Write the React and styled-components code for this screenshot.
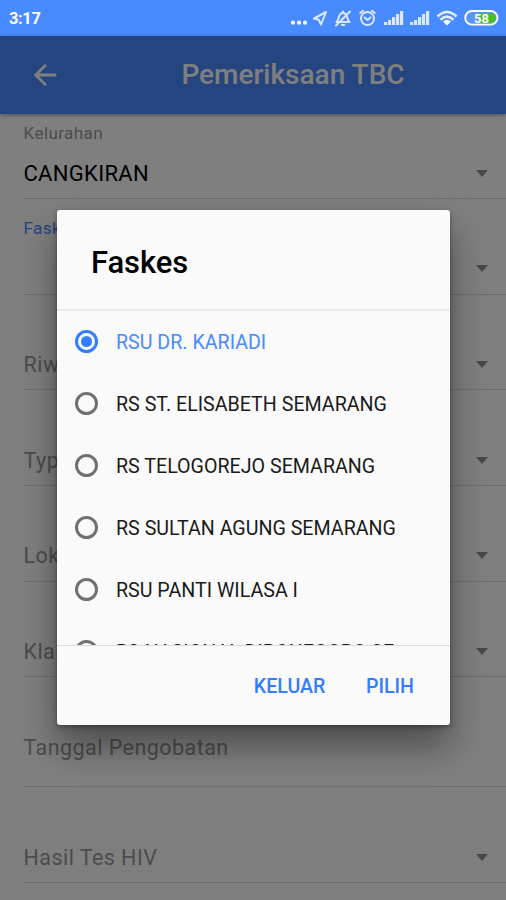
import React, { useState } from 'react';
import styled, { createGlobalStyle } from 'styled-components';
import { MdArrowBack } from 'react-icons/md';

const theme = {
  primary: '#488aff',
  link: '#327eff',
  page: '#ffffff',
  dialog: '#fafafa',
};

const GlobalStyle = createGlobalStyle`
  * {
    box-sizing: border-box;
  }

  body {
    margin: 0;
    overflow: hidden;
    font-family: Roboto, "Liberation Sans", sans-serif;
  }
`;

const Screen = styled.div`
  position: relative;
  width: 506px;
  height: 900px;
  overflow: hidden;
  background: ${theme.page};
`;

const StatusBar = styled.div`
  display: flex;
  align-items: center;
  justify-content: space-between;
  height: 36px;
  padding: 0 7px 0 9px;
  background: ${theme.primary};
  color: #ffffff;
`;

const Clock = styled.span`
  font-size: 16.5px;
  font-weight: 700;
  line-height: 36px;
  padding-top: 2px;
  letter-spacing: -0.4px;
`;

const StatusIcons = styled.svg`
  display: block;
  width: 211px;
  height: 36px;
`;

const Header = styled.header`
  display: flex;
  align-items: center;
  height: 78px;
  background: ${theme.primary};
  color: #ffffff;
  box-shadow: 0 1px 4px rgb(0 0 0 / 40%);
`;

const BackButton = styled.button`
  display: flex;
  align-items: center;
  justify-content: center;
  width: 90px;
  height: 78px;
  padding: 0;
  border: 0;
  background: none;
  color: inherit;
  font-size: 34px;
`;

const Title = styled.h1`
  flex: 1;
  margin: 0;
  padding: 0 10px 1px 0;
  font-size: 28px;
  font-weight: 500;
  text-align: center;
`;

const Form = styled.form`
  padding-left: 23.5px;
`;

const Field = styled.div`
  display: flex;
  flex-direction: column;
  justify-content: flex-end;
  height: ${({ $height }) => $height || 95.7}px;
  border-bottom: 1px solid #dedede;
`;

const FieldLabel = styled.label`
  font-size: 17.2px;
  line-height: 20px;
  letter-spacing: 0.35px;
  color: ${({ $active }) => ($active ? theme.primary : '#999999')};
`;

const FieldRow = styled.div`
  display: flex;
  align-items: center;
  justify-content: space-between;
  height: 24px;
  margin: ${({ $floating, $date }) => ($floating ? '18.5px 18.5px 13px 0' : $date ? '0 18.5px 27px 0' : '0 18.5px 13px 0')};
`;

const FieldText = styled.span`
  font-size: ${({ $value }) => ($value ? '22px' : '21.5px')};
  letter-spacing: ${({ $value }) => ($value ? '0.3px' : '0.45px')};
  color: ${({ $value }) => ($value ? '#000000' : '#999999')};
`;

const Caret = styled.span`
  margin-left: auto;
  border: 6.5px solid transparent;
  border-top: 7px solid #909090;
  border-bottom: 0;
`;

const Backdrop = styled.div`
  position: absolute;
  inset: 36px 0 0;
  background: rgb(0 0 0 / 50%);
`;

const Dialog = styled.div`
  position: absolute;
  top: 210px;
  left: 57px;
  display: flex;
  flex-direction: column;
  width: 393px;
  height: 515px;
  border-radius: 3px;
  background: ${theme.dialog};
  box-shadow: 0 21px 36px rgb(0 0 0 / 40%), 0 2px 5px rgb(0 0 0 / 35%);
`;

const DialogTitle = styled.h2`
  height: 99px;
  margin: 0;
  padding: 34px 34px 0;
  font-size: 31px;
  font-weight: 500;
  line-height: 37px;
  letter-spacing: -0.1px;
  color: #000000;
`;

const OptionList = styled.div`
  height: 337px;
  overflow: hidden;
  border-top: 2px solid #ececec;
  border-bottom: 1px solid #dcdcdc;
`;

const Option = styled.button`
  display: flex;
  align-items: center;
  gap: 18px;
  width: 100%;
  height: 61.9px;
  padding: 0 0 0 18px;
  border: 0;
  background: none;
  font-family: inherit;
  font-size: 19.65px;
  text-align: left;
  white-space: nowrap;
  color: ${({ $checked }) => ($checked ? theme.primary : '#1a1a1a')};
`;

const Radio = styled.span`
  display: flex;
  align-items: center;
  justify-content: center;
  flex: none;
  width: 23px;
  height: 23px;
  border: 3px solid ${({ $checked }) => ($checked ? theme.link : '#707070')};
  border-radius: 50%;

  &::after {
    content: '';
    width: 11px;
    height: 11px;
    border-radius: 50%;
    background: ${({ $checked }) => ($checked ? theme.link : 'transparent')};
  }
`;

const OptionText = styled.span`
  width: 300px;
  padding-top: 2px;
  overflow: hidden;
  text-overflow: ellipsis;
`;

const DialogFooter = styled.div`
  display: flex;
  align-items: center;
  justify-content: flex-end;
  gap: 40.5px;
  flex: 1;
  padding: 2px 36px 0 0;
`;

const DialogButton = styled.button`
  padding: 0;
  border: 0;
  background: none;
  color: ${theme.link};
  font-family: inherit;
  font-size: 19.6px;
  font-weight: 500;
`;

const fields = [
  { label: 'Kelurahan', value: 'CANGKIRAN', height: 85, floating: true },
  { label: 'Faskes', value: '', active: true, floating: true },
  { label: 'Riwayat' },
  { label: 'Type' },
  { label: 'Lokasi' },
  { label: 'Klasifikasi' },
  { label: 'Tanggal Pengobatan', height: 110, date: true },
  { label: 'Hasil Tes HIV' },
];

const hospitals = [
  'RSU DR. KARIADI',
  'RS ST. ELISABETH SEMARANG',
  'RS TELOGOREJO SEMARANG',
  'RS SULTAN AGUNG SEMARANG',
  'RSU PANTI WILASA I',
  'RS NASIONAL DIPONEGORO SE',
];

const SignalBars = ({ x }) => (
  <g fill="#dbe8ff">
    {[3, 5, 8, 11, 14].map((h, i) => (
      <rect key={h} x={x + i * 4} y={25 - h} width="3.2" height={h} />
    ))}
  </g>
);

const StatusGlyphs = () => (
  <StatusIcons viewBox="288 0 211 36">
    <g fill="#ffffff">
      <circle cx="293" cy="22.7" r="2.1" />
      <circle cx="299" cy="22.7" r="2.1" />
      <circle cx="305" cy="22.7" r="2.1" />
    </g>
    <g fill="none" stroke="#dbe8ff" strokeWidth="2" strokeLinejoin="round" strokeLinecap="round">
      <path d="M326 12 L314 18.5 L318.7 19.7 L321 24.5 Z" />
      {/* muted bell */}
      <path d="M336.5 22 C339.5 20.5 337.5 13 343 13 C348.5 13 346.5 20.5 349.5 22 Z" />
      <path d="M343 11.5 V12.5 M341.8 25 H344.2 M350 11.5 L336 25.5" />
      {/* alarm */}
      <circle cx="367.5" cy="18.5" r="6.5" />
      <path d="M364.5 17.5 L367.5 20 L370.5 17.5 M360.3 13 L363 10.8 M374.7 13 L372 10.8" />
    </g>
    <SignalBars x={384} />
    <SignalBars x={410} />
    <g fill="none" stroke="#e6efff" strokeWidth="2.6">
      <path d="M437.5 16.5 Q447 7.5 456.5 16.5" />
      <path d="M440.5 19.8 Q447 13.5 453.5 19.8" />
    </g>
    <path d="M443 21.5 Q447 18 451 21.5 L447 25.5 Z" fill="#ffffff" />
    <rect x="465.2" y="11" width="32.3" height="13.6" rx="6.8" fill="#5b95f8" stroke="#ffffff" strokeWidth="1.9" />
    <path d="M479 12.9 H490.8 A4.9 4.9 0 0 1 490.8 22.7 H479 Z" fill="#43c41c" />
    <text x="481.5" y="22.6" textAnchor="middle" fontSize="13" fontWeight="700" fill="#ffffff">58</text>
  </StatusIcons>
);

const App = () => {
  const [selected, setSelected] = useState(0);

  return (
    <Screen>
      <GlobalStyle />
      <StatusBar>
        <Clock>3:17</Clock>
        <StatusGlyphs />
      </StatusBar>
      <Header>
        <BackButton aria-label="Kembali">
          <MdArrowBack />
        </BackButton>
        <Title>Pemeriksaan TBC</Title>
      </Header>
      <Form>
        {fields.map((field) => (
          <Field key={field.label} $height={field.height}>
            {field.floating && <FieldLabel $active={field.active}>{field.label}</FieldLabel>}
            <FieldRow $floating={field.floating} $date={field.date}>
              <FieldText $value={field.floating}>{field.floating ? field.value : field.label}</FieldText>
              {!field.date && <Caret />}
            </FieldRow>
          </Field>
        ))}
      </Form>
      <Backdrop />
      <Dialog role="dialog">
        <DialogTitle>Faskes</DialogTitle>
        <OptionList>
          {hospitals.map((name, index) => (
            <Option key={name} $checked={index === selected} onClick={() => setSelected(index)}>
              <Radio $checked={index === selected} />
              <OptionText>{name}</OptionText>
            </Option>
          ))}
        </OptionList>
        <DialogFooter>
          <DialogButton>KELUAR</DialogButton>
          <DialogButton>PILIH</DialogButton>
        </DialogFooter>
      </Dialog>
    </Screen>
  );
};

export default App;
